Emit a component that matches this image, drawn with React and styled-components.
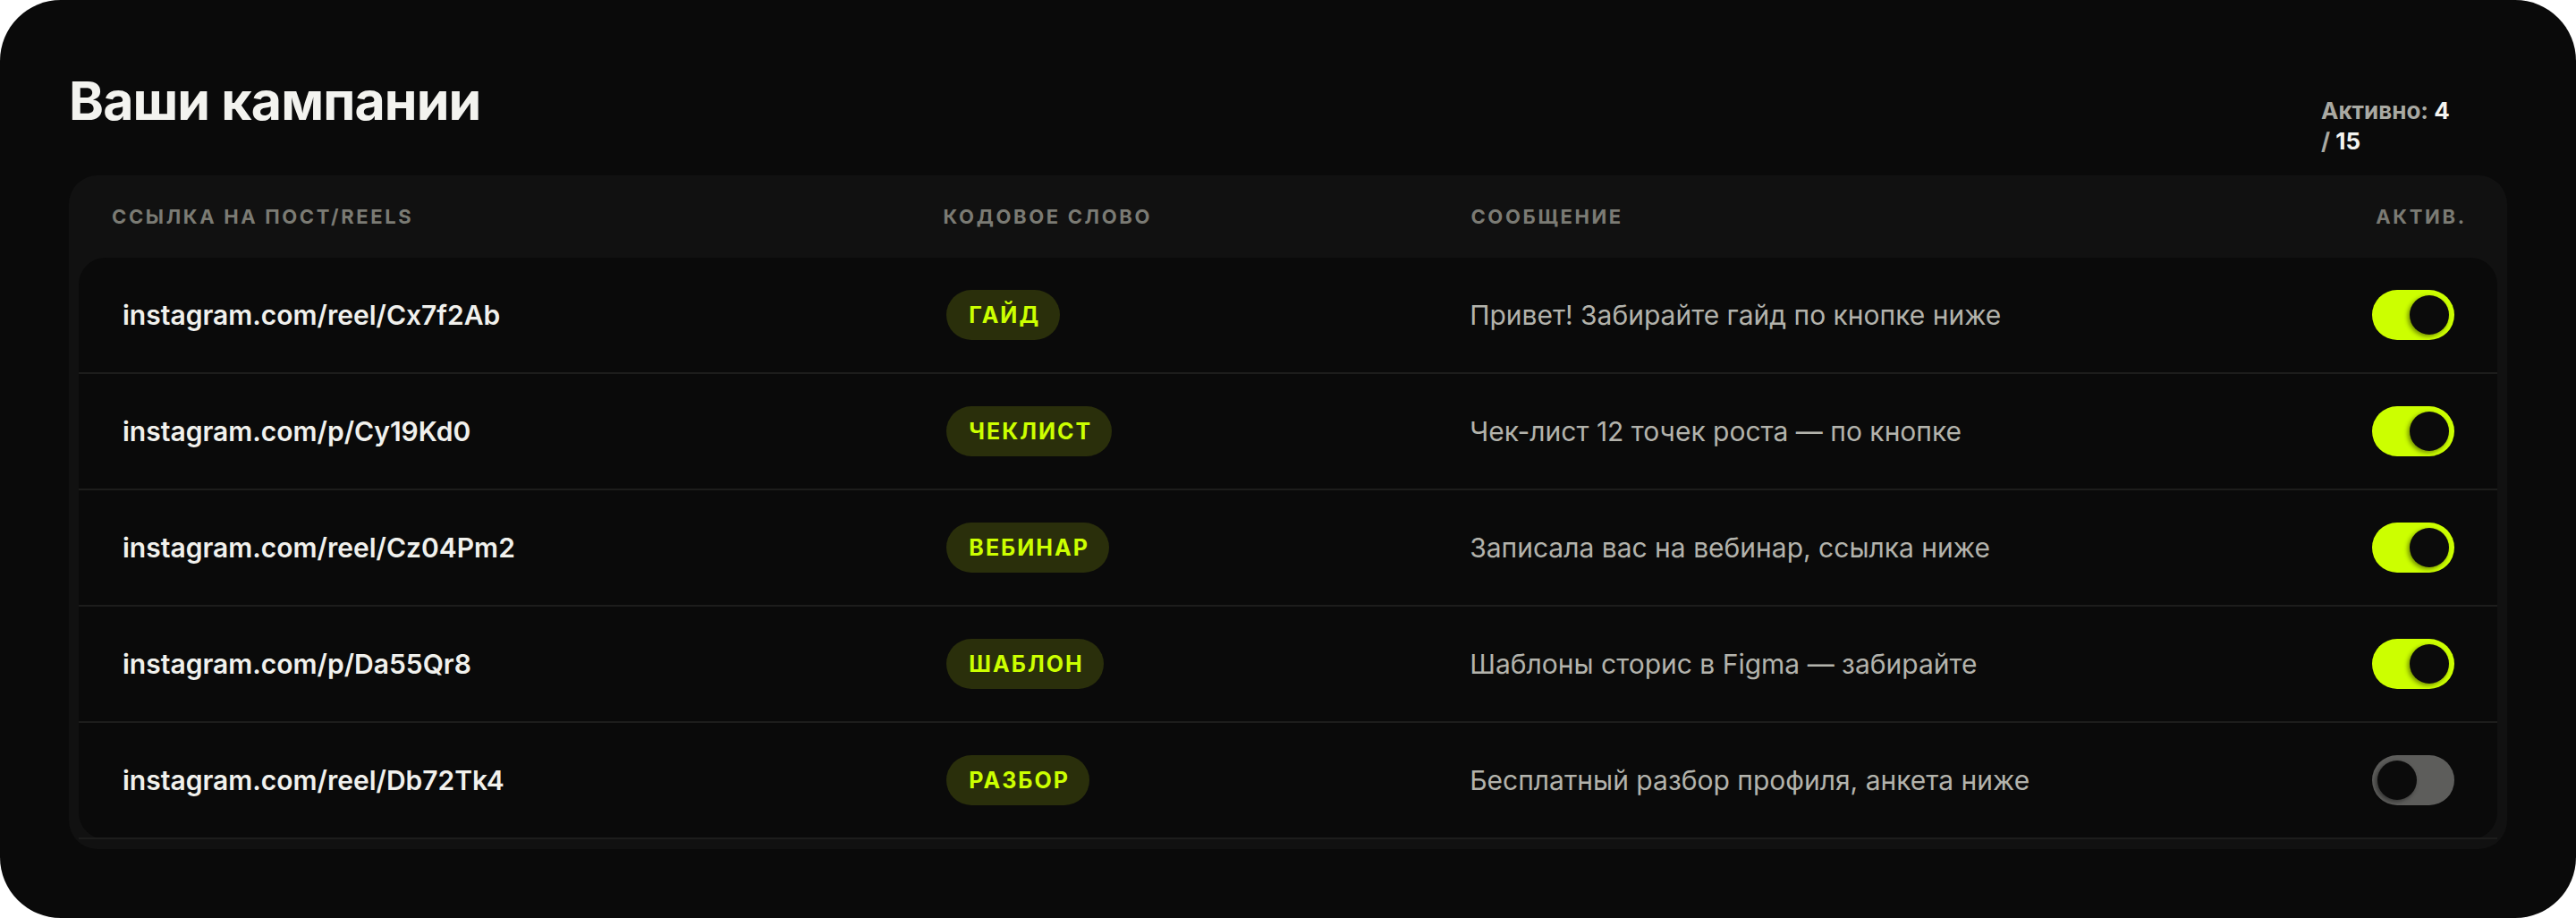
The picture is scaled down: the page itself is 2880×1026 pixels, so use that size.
import React from "react";
import styled, { createGlobalStyle } from "styled-components";

const GlobalStyle = createGlobalStyle`
  * { box-sizing: border-box; }
  html, body { margin: 0; padding: 0; background: #ffffff; }
  body { font-family: Inter, "Noto Sans", "DejaVu Sans", sans-serif; }
`;

const Card = styled.div`
  min-height: 1026px;
  background: #0a0a0a;
  border-radius: 68px;
  padding: 78px 77px 0 77px;
  display: flex;
  flex-direction: column;
`;

const Header = styled.header`
  display: flex;
  justify-content: space-between;
  align-items: flex-start;
  margin-bottom: 21px;
`;

const Title = styled.h1`
  margin: 0;
  font-size: 59px;
  line-height: 70px;
  font-weight: 700;
  letter-spacing: -0.015em;
  color: #f3f3ef;
`;

const Stat = styled.div`
  margin-top: 29px;
  margin-right: 52px;
  width: 156px;
  font-size: 26px;
  line-height: 34px;
  font-weight: 700;
  color: #a9a9a2;
`;

const StatNum = styled.span`
  color: #f4f4f0;
`;

const Panel = styled.section`
  background: #111111;
  border-radius: 32px;
  padding: 0 11px 11px 11px;
`;

const columns = `1.6fr 1fr 1.5fr 0.42fr`;

const HeadRow = styled.div`
  display: grid;
  grid-template-columns: ${columns};
  column-gap: 24px;
  align-items: center;
  height: 92px;
  padding: 0 37px;
`;

const HeadCell = styled.div`
  font-size: 22px;
  font-weight: 700;
  letter-spacing: 0.12em;
  text-transform: uppercase;
  color: #7b7b74;
  text-align: ${(p) => (p.$right ? "right" : "left")};
  margin-right: ${(p) => (p.$right ? "-0.12em" : "0")};
`;

const Rows = styled.div`
  background: #0a0a0a;
  border-radius: 30px;
`;

const Row = styled.div`
  display: grid;
  grid-template-columns: ${columns};
  column-gap: 24px;
  align-items: center;
  height: 130px;
  padding: 0 48px 0 49px;
  border-bottom: 2px solid #1d1d1c;
`;

const Link = styled.div`
  font-size: 30px;
  font-weight: 600;
  color: #f1f1ed;
  letter-spacing: 0;
  white-space: nowrap;
`;

const TagCell = styled.div`
  display: flex;
`;

const Tag = styled.span`
  display: inline-flex;
  align-items: center;
  height: 56px;
  padding: 0 22px 0 25px;
  border-radius: 28px;
  background: #2a2f0b;
  color: #ccff00;
  font-size: 25px;
  font-weight: 700;
  letter-spacing: 0.08em;
`;

const Message = styled.div`
  font-size: 30px;
  font-weight: 400;
  color: #b3b3ac;
  white-space: nowrap;
`;

const ToggleCell = styled.div`
  display: flex;
  justify-content: flex-end;
`;

const Toggle = styled.span`
  display: flex;
  justify-content: ${(p) => (p.$on ? "flex-end" : "flex-start")};
  align-items: center;
  width: 92px;
  height: 56px;
  padding: 6px;
  border-radius: 28px;
  background: ${(p) => (p.$on ? "#ccff00" : "#5d5d5b")};
`;

const Knob = styled.span`
  width: 44px;
  height: 44px;
  border-radius: 50%;
  background: #0b0b0b;
  box-shadow: -2px 2px 5px rgba(0, 0, 0, 0.45);
`;

const data = [
  { link: "instagram.com/reel/Cx7f2Ab", tag: "ГАЙД", msg: "Привет! Забирайте гайд по кнопке ниже", on: true },
  { link: "instagram.com/p/Cy19Kd0", tag: "ЧЕКЛИСТ", msg: "Чек-лист 12 точек роста — по кнопке", on: true },
  { link: "instagram.com/reel/Cz04Pm2", tag: "ВЕБИНАР", msg: "Записала вас на вебинар, ссылка ниже", on: true },
  { link: "instagram.com/p/Da55Qr8", tag: "ШАБЛОН", msg: "Шаблоны сторис в Figma — забирайте", on: true },
  { link: "instagram.com/reel/Db72Tk4", tag: "РАЗБОР", msg: "Бесплатный разбор профиля, анкета ниже", on: false },
];

export default function App() {
  return (
    <>
      <GlobalStyle />
      <Card>
        <Header>
          <Title>Ваши кампании</Title>
          <Stat>
            Активно: <StatNum>4</StatNum> / <StatNum>15</StatNum>
          </Stat>
        </Header>
        <Panel>
          <HeadRow>
            <HeadCell>Ссылка на пост/Reels</HeadCell>
            <HeadCell>Кодовое слово</HeadCell>
            <HeadCell>Сообщение</HeadCell>
            <HeadCell $right>Актив.</HeadCell>
          </HeadRow>
          <Rows>
            {data.map((r) => (
              <Row key={r.link}>
                <Link>{r.link}</Link>
                <TagCell>
                  <Tag>{r.tag}</Tag>
                </TagCell>
                <Message>{r.msg}</Message>
                <ToggleCell>
                  <Toggle $on={r.on}>
                    <Knob />
                  </Toggle>
                </ToggleCell>
              </Row>
            ))}
          </Rows>
        </Panel>
      </Card>
    </>
  );
}
